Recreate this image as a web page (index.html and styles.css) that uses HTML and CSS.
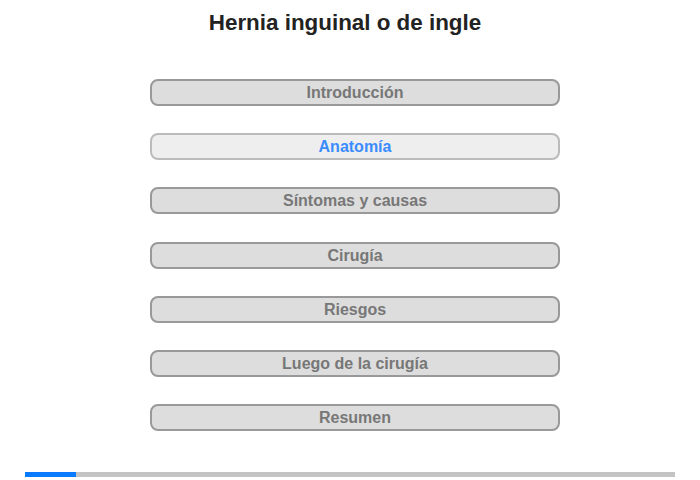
FILE: index.html
```html
<!DOCTYPE html>
<html lang="es">
<head>
<meta charset="utf-8">
<title>Hernia inguinal o de ingle</title>
<link rel="stylesheet" href="styles.css">
</head>
<body>
<div class="page">
  <h1 class="title">Hernia inguinal o de ingle</h1>
  <nav class="menu">
    <div class="item">Introducción</div>
    <div class="item active">Anatomía</div>
    <div class="item">Síntomas y causas</div>
    <div class="item">Cirugía</div>
    <div class="item">Riesgos</div>
    <div class="item">Luego de la cirugía</div>
    <div class="item">Resumen</div>
  </nav>
  <div class="progress"><div class="progress-fill" style="width:51px"></div></div>
</div>
</body>
</html>
```
FILE: styles.css
```css
html, body {
  margin: 0;
  padding: 0;
  background: #fff;
}
body {
  font-family: "Liberation Sans", Arial, sans-serif;
}
.page {
  width: 700px;
  height: 480px;
  display: flex;
  flex-direction: column;
  align-items: center;
}
.title {
  margin: 10px 10px 0 0;
  font-size: 22.4px;
  font-weight: bold;
  line-height: 26px;
  color: #222;
}
.menu {
  margin: 43px 0 0 10px;
  display: flex;
  flex-direction: column;
  gap: 27.2px;
}
.item {
  box-sizing: border-box;
  width: 410px;
  height: 27px;
  border: 2px solid #999;
  border-radius: 8px;
  background: #ddd;
  color: #777;
  font-size: 16px;
  font-weight: bold;
  line-height: 23px;
  text-align: center;
}
.item.active {
  border-color: #bbb;
  background: #eee;
  color: #3a8cff;
}
.progress {
  margin-top: 41px;
  width: 650px;
  height: 5px;
  background: #c4c4c4;
}
.progress-fill {
  height: 100%;
  background: #0a7bff;
}
```
